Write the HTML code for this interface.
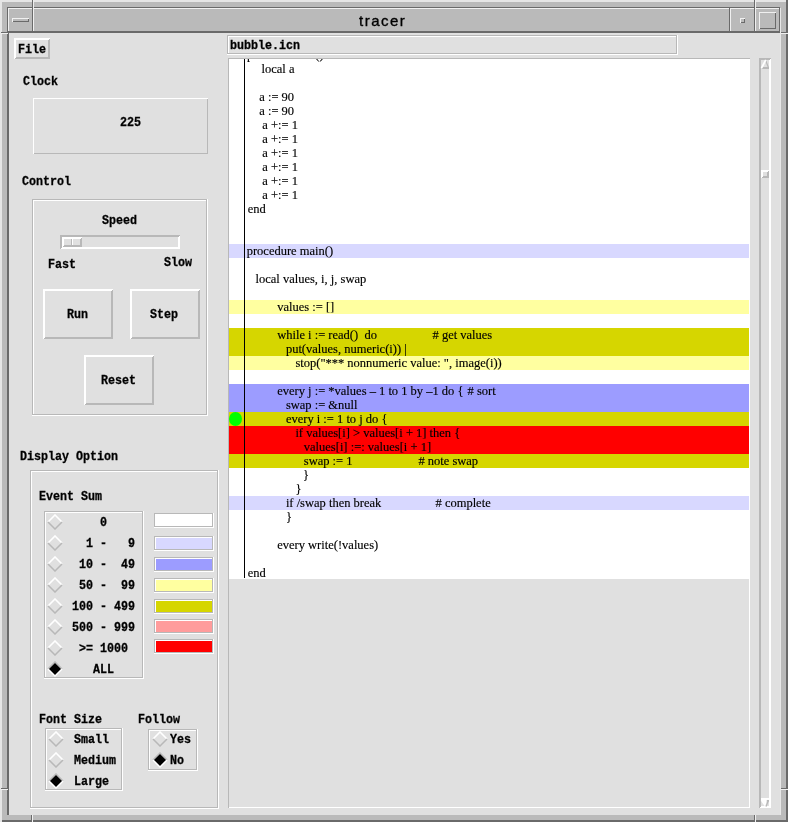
<!DOCTYPE html>
<html><head><meta charset="utf-8"><style>
html,body{margin:0;padding:0;width:788px;height:822px;overflow:hidden;background:#e0e0e0}
div,svg{position:absolute}
.m{font-family:"Liberation Mono",monospace;font-weight:bold;line-height:0;white-space:pre;transform-origin:0 0;color:#000;-webkit-text-stroke:0.3px #000;filter:grayscale(1)}
.s{font-family:"Liberation Serif",serif;line-height:0;white-space:pre;color:#000;-webkit-text-stroke:0.15px #000;filter:grayscale(1)}
.n{font-family:"Liberation Sans",sans-serif;line-height:0;white-space:pre;color:#000;-webkit-text-stroke:0.35px #000;filter:grayscale(1)}
</style></head><body>
<div style="left:0px;top:0px;width:788px;height:822px;background:#bababa;"></div>
<div style="left:0px;top:0px;width:786px;height:2px;background:#e6e6e6;"></div>
<div style="left:0px;top:0px;width:2px;height:822px;background:#e6e6e6;"></div>
<div style="left:2px;top:820px;width:786px;height:2px;background:#6a6a6a;"></div>
<div style="left:786px;top:0px;width:2px;height:822px;background:#6a6a6a;"></div>
<div style="left:7px;top:7px;width:773px;height:1px;background:#6a6a6a;"></div>
<div style="left:7px;top:7px;width:1px;height:808px;background:#6a6a6a;"></div>
<div style="left:8px;top:8px;width:772px;height:23px;background:#bababa;"></div>
<div style="left:8px;top:8px;width:25px;height:1px;background:#f0f0f0;"></div>
<div style="left:8px;top:8px;width:1px;height:23px;background:#f0f0f0;"></div>
<div style="left:32px;top:8px;width:1px;height:23px;background:#6a6a6a;"></div>
<div style="left:33px;top:8px;width:697px;height:1px;background:#f0f0f0;"></div>
<div style="left:33px;top:8px;width:1px;height:23px;background:#f0f0f0;"></div>
<div style="left:729px;top:8px;width:1px;height:23px;background:#6a6a6a;"></div>
<div style="left:730px;top:8px;width:25px;height:1px;background:#f0f0f0;"></div>
<div style="left:730px;top:8px;width:1px;height:23px;background:#f0f0f0;"></div>
<div style="left:754px;top:8px;width:1px;height:23px;background:#6a6a6a;"></div>
<div style="left:755px;top:8px;width:25px;height:1px;background:#f0f0f0;"></div>
<div style="left:755px;top:8px;width:1px;height:23px;background:#f0f0f0;"></div>
<div style="left:779px;top:8px;width:1px;height:23px;background:#6a6a6a;"></div>
<div style="left:8px;top:31px;width:772px;height:2px;background:#6a6a6a;"></div>
<div style="left:780px;top:8px;width:1px;height:807px;background:#e8e8e8;"></div>
<div style="left:12px;top:18px;width:17px;height:1px;background:#f0f0f0;"></div>
<div style="left:12px;top:18px;width:1px;height:4px;background:#f0f0f0;"></div>
<div style="left:13px;top:21px;width:16px;height:1px;background:#6a6a6a;"></div>
<div style="left:28px;top:19px;width:1px;height:3px;background:#6a6a6a;"></div>
<div style="left:740px;top:18px;width:5px;height:1px;background:#f0f0f0;"></div>
<div style="left:740px;top:18px;width:1px;height:5px;background:#f0f0f0;"></div>
<div style="left:741px;top:22px;width:4px;height:1px;background:#6a6a6a;"></div>
<div style="left:744px;top:19px;width:1px;height:4px;background:#6a6a6a;"></div>
<div style="left:759px;top:12px;width:17px;height:1px;background:#f0f0f0;"></div>
<div style="left:759px;top:12px;width:1px;height:17px;background:#f0f0f0;"></div>
<div style="left:760px;top:28px;width:16px;height:1px;background:#6a6a6a;"></div>
<div style="left:775px;top:13px;width:1px;height:16px;background:#6a6a6a;"></div>
<div style="left:1px;top:32px;width:7px;height:1px;background:#6a6a6a;"></div>
<div style="left:1px;top:33px;width:7px;height:1px;background:#f0f0f0;"></div>
<div style="left:781px;top:32px;width:7px;height:1px;background:#6a6a6a;"></div>
<div style="left:781px;top:33px;width:7px;height:1px;background:#f0f0f0;"></div>
<div style="left:1px;top:788px;width:7px;height:1px;background:#6a6a6a;"></div>
<div style="left:1px;top:789px;width:7px;height:1px;background:#f0f0f0;"></div>
<div style="left:781px;top:788px;width:7px;height:1px;background:#6a6a6a;"></div>
<div style="left:781px;top:789px;width:7px;height:1px;background:#f0f0f0;"></div>
<div style="left:32px;top:0px;width:1px;height:8px;background:#6a6a6a;"></div>
<div style="left:33px;top:0px;width:1px;height:8px;background:#f0f0f0;"></div>
<div style="left:754px;top:0px;width:1px;height:8px;background:#6a6a6a;"></div>
<div style="left:755px;top:0px;width:1px;height:8px;background:#f0f0f0;"></div>
<div style="left:31px;top:815px;width:1px;height:7px;background:#6a6a6a;"></div>
<div style="left:32px;top:815px;width:1px;height:7px;background:#f0f0f0;"></div>
<div style="left:754px;top:815px;width:1px;height:7px;background:#6a6a6a;"></div>
<div style="left:755px;top:815px;width:1px;height:7px;background:#f0f0f0;"></div>
<div class="n" style="left:359px;top:20.60px;font-size:15px;letter-spacing:1.5px">tracer</div>
<div style="left:8px;top:33px;width:772px;height:782px;background:#e0e0e0;"></div>
<div style="left:8px;top:33px;width:1px;height:782px;background:#6a6a6a;"></div>
<div style="left:14px;top:38px;width:36px;height:1px;background:#ffffff;"></div>
<div style="left:14px;top:38px;width:1px;height:21px;background:#ffffff;"></div>
<div style="left:15px;top:58px;width:35px;height:1px;background:#b8b8b8;"></div>
<div style="left:49px;top:39px;width:1px;height:20px;background:#b8b8b8;"></div>
<div style="left:15px;top:39px;width:34px;height:1px;background:#ffffff;"></div>
<div style="left:15px;top:39px;width:1px;height:19px;background:#ffffff;"></div>
<div style="left:16px;top:57px;width:33px;height:1px;background:#b8b8b8;"></div>
<div style="left:48px;top:40px;width:1px;height:18px;background:#b8b8b8;"></div>
<div class="m" style="left:18px;top:50.41px;font-size:13.5px;transform:scaleX(0.864)">File</div>
<div class="m" style="left:23px;top:82.41px;font-size:13.5px;transform:scaleX(0.864)">Clock</div>
<div style="left:33px;top:98px;width:175px;height:1px;background:#ffffff;"></div>
<div style="left:33px;top:98px;width:1px;height:56px;background:#ffffff;"></div>
<div style="left:34px;top:153px;width:174px;height:1px;background:#b8b8b8;"></div>
<div style="left:207px;top:99px;width:1px;height:55px;background:#b8b8b8;"></div>
<div class="m" style="left:120px;top:122.91px;font-size:13.5px;transform:scaleX(0.864)">225</div>
<div class="m" style="left:22px;top:181.91px;font-size:13.5px;transform:scaleX(0.864)">Control</div>
<div style="left:32px;top:199px;width:175px;height:1px;background:#b8b8b8;"></div>
<div style="left:32px;top:199px;width:1px;height:216px;background:#b8b8b8;"></div>
<div style="left:33px;top:414px;width:174px;height:1px;background:#b8b8b8;"></div>
<div style="left:206px;top:200px;width:1px;height:215px;background:#b8b8b8;"></div>
<div style="left:33px;top:200px;width:173px;height:1px;background:#ffffff;"></div>
<div style="left:33px;top:200px;width:1px;height:214px;background:#ffffff;"></div>
<div style="left:32px;top:415px;width:176px;height:1px;background:#ffffff;"></div>
<div style="left:207px;top:199px;width:1px;height:217px;background:#ffffff;"></div>
<div class="m" style="left:102px;top:220.71px;font-size:13.5px;transform:scaleX(0.864)">Speed</div>
<div style="left:60px;top:235px;width:120px;height:1px;background:#b8b8b8;"></div>
<div style="left:60px;top:235px;width:1px;height:14px;background:#b8b8b8;"></div>
<div style="left:61px;top:248px;width:119px;height:1px;background:#ffffff;"></div>
<div style="left:179px;top:236px;width:1px;height:13px;background:#ffffff;"></div>
<div style="left:61px;top:236px;width:118px;height:1px;background:#b8b8b8;"></div>
<div style="left:61px;top:236px;width:1px;height:12px;background:#b8b8b8;"></div>
<div style="left:62px;top:247px;width:117px;height:1px;background:#ffffff;"></div>
<div style="left:178px;top:237px;width:1px;height:11px;background:#ffffff;"></div>
<div style="left:62px;top:237px;width:20px;height:1px;background:#ffffff;"></div>
<div style="left:62px;top:237px;width:1px;height:10px;background:#ffffff;"></div>
<div style="left:63px;top:246px;width:19px;height:1px;background:#b8b8b8;"></div>
<div style="left:81px;top:238px;width:1px;height:9px;background:#b8b8b8;"></div>
<div style="left:63px;top:238px;width:18px;height:1px;background:#ffffff;"></div>
<div style="left:63px;top:238px;width:1px;height:8px;background:#ffffff;"></div>
<div style="left:64px;top:245px;width:17px;height:1px;background:#b8b8b8;"></div>
<div style="left:80px;top:239px;width:1px;height:7px;background:#b8b8b8;"></div>
<div style="left:71px;top:239px;width:1px;height:6px;background:#b8b8b8;"></div>
<div style="left:72px;top:239px;width:1px;height:6px;background:#ffffff;"></div>
<div class="m" style="left:48px;top:264.81px;font-size:13.5px;transform:scaleX(0.864)">Fast</div>
<div class="m" style="left:164px;top:263.41px;font-size:13.5px;transform:scaleX(0.864)">Slow</div>
<div style="left:43px;top:289px;width:70px;height:1px;background:#ffffff;"></div>
<div style="left:43px;top:289px;width:1px;height:50px;background:#ffffff;"></div>
<div style="left:44px;top:338px;width:69px;height:1px;background:#b8b8b8;"></div>
<div style="left:112px;top:290px;width:1px;height:49px;background:#b8b8b8;"></div>
<div style="left:44px;top:290px;width:68px;height:1px;background:#ffffff;"></div>
<div style="left:44px;top:290px;width:1px;height:48px;background:#ffffff;"></div>
<div style="left:45px;top:337px;width:67px;height:1px;background:#b8b8b8;"></div>
<div style="left:111px;top:291px;width:1px;height:47px;background:#b8b8b8;"></div>
<div style="left:130px;top:289px;width:70px;height:1px;background:#ffffff;"></div>
<div style="left:130px;top:289px;width:1px;height:50px;background:#ffffff;"></div>
<div style="left:131px;top:338px;width:69px;height:1px;background:#b8b8b8;"></div>
<div style="left:199px;top:290px;width:1px;height:49px;background:#b8b8b8;"></div>
<div style="left:131px;top:290px;width:68px;height:1px;background:#ffffff;"></div>
<div style="left:131px;top:290px;width:1px;height:48px;background:#ffffff;"></div>
<div style="left:132px;top:337px;width:67px;height:1px;background:#b8b8b8;"></div>
<div style="left:198px;top:291px;width:1px;height:47px;background:#b8b8b8;"></div>
<div style="left:84px;top:355px;width:70px;height:1px;background:#ffffff;"></div>
<div style="left:84px;top:355px;width:1px;height:50px;background:#ffffff;"></div>
<div style="left:85px;top:404px;width:69px;height:1px;background:#b8b8b8;"></div>
<div style="left:153px;top:356px;width:1px;height:49px;background:#b8b8b8;"></div>
<div style="left:85px;top:356px;width:68px;height:1px;background:#ffffff;"></div>
<div style="left:85px;top:356px;width:1px;height:48px;background:#ffffff;"></div>
<div style="left:86px;top:403px;width:67px;height:1px;background:#b8b8b8;"></div>
<div style="left:152px;top:357px;width:1px;height:47px;background:#b8b8b8;"></div>
<div class="m" style="left:67px;top:315.41px;font-size:13.5px;transform:scaleX(0.864)">Run</div>
<div class="m" style="left:150px;top:315.41px;font-size:13.5px;transform:scaleX(0.864)">Step</div>
<div class="m" style="left:101px;top:381.41px;font-size:13.5px;transform:scaleX(0.864)">Reset</div>
<div class="m" style="left:20px;top:457.41px;font-size:13.5px;transform:scaleX(0.864)">Display Option</div>
<div style="left:30px;top:470px;width:188px;height:1px;background:#b8b8b8;"></div>
<div style="left:30px;top:470px;width:1px;height:338px;background:#b8b8b8;"></div>
<div style="left:31px;top:807px;width:187px;height:1px;background:#b8b8b8;"></div>
<div style="left:217px;top:471px;width:1px;height:337px;background:#b8b8b8;"></div>
<div style="left:31px;top:471px;width:186px;height:1px;background:#ffffff;"></div>
<div style="left:31px;top:471px;width:1px;height:336px;background:#ffffff;"></div>
<div style="left:30px;top:808px;width:189px;height:1px;background:#ffffff;"></div>
<div style="left:218px;top:470px;width:1px;height:339px;background:#ffffff;"></div>
<div class="m" style="left:39px;top:497.41px;font-size:13.5px;transform:scaleX(0.864)">Event Sum</div>
<div style="left:44px;top:511px;width:99px;height:1px;background:#b8b8b8;"></div>
<div style="left:44px;top:511px;width:1px;height:167px;background:#b8b8b8;"></div>
<div style="left:45px;top:677px;width:98px;height:1px;background:#b8b8b8;"></div>
<div style="left:142px;top:512px;width:1px;height:166px;background:#b8b8b8;"></div>
<div style="left:45px;top:512px;width:97px;height:1px;background:#ffffff;"></div>
<div style="left:45px;top:512px;width:1px;height:165px;background:#ffffff;"></div>
<div style="left:44px;top:678px;width:100px;height:1px;background:#ffffff;"></div>
<div style="left:143px;top:511px;width:1px;height:168px;background:#ffffff;"></div>
<svg style="left:47.2px;top:513.5px" width="16" height="16" viewBox="0 0 16 16"><path d="M1 8 L8 1 L15 8" fill="none" stroke="#fff" stroke-width="1.6"/><path d="M1 8 L8 15 L15 8" fill="none" stroke="#b8b8b8" stroke-width="1.5"/></svg>
<div class="m" style="left:72.4px;top:523.41px;font-size:13.5px;transform:scaleX(0.864)">    0</div>
<svg style="left:47.2px;top:534.5px" width="16" height="16" viewBox="0 0 16 16"><path d="M1 8 L8 1 L15 8" fill="none" stroke="#fff" stroke-width="1.6"/><path d="M1 8 L8 15 L15 8" fill="none" stroke="#b8b8b8" stroke-width="1.5"/></svg>
<div class="m" style="left:72.4px;top:544.41px;font-size:13.5px;transform:scaleX(0.864)">  1 -   9</div>
<svg style="left:47.2px;top:555.5px" width="16" height="16" viewBox="0 0 16 16"><path d="M1 8 L8 1 L15 8" fill="none" stroke="#fff" stroke-width="1.6"/><path d="M1 8 L8 15 L15 8" fill="none" stroke="#b8b8b8" stroke-width="1.5"/></svg>
<div class="m" style="left:72.4px;top:565.41px;font-size:13.5px;transform:scaleX(0.864)"> 10 -  49</div>
<svg style="left:47.2px;top:576.5px" width="16" height="16" viewBox="0 0 16 16"><path d="M1 8 L8 1 L15 8" fill="none" stroke="#fff" stroke-width="1.6"/><path d="M1 8 L8 15 L15 8" fill="none" stroke="#b8b8b8" stroke-width="1.5"/></svg>
<div class="m" style="left:72.4px;top:586.41px;font-size:13.5px;transform:scaleX(0.864)"> 50 -  99</div>
<svg style="left:47.2px;top:597.5px" width="16" height="16" viewBox="0 0 16 16"><path d="M1 8 L8 1 L15 8" fill="none" stroke="#fff" stroke-width="1.6"/><path d="M1 8 L8 15 L15 8" fill="none" stroke="#b8b8b8" stroke-width="1.5"/></svg>
<div class="m" style="left:72.4px;top:607.41px;font-size:13.5px;transform:scaleX(0.864)">100 - 499</div>
<svg style="left:47.2px;top:618.5px" width="16" height="16" viewBox="0 0 16 16"><path d="M1 8 L8 1 L15 8" fill="none" stroke="#fff" stroke-width="1.6"/><path d="M1 8 L8 15 L15 8" fill="none" stroke="#b8b8b8" stroke-width="1.5"/></svg>
<div class="m" style="left:72.4px;top:628.41px;font-size:13.5px;transform:scaleX(0.864)">500 - 999</div>
<svg style="left:47.2px;top:639.5px" width="16" height="16" viewBox="0 0 16 16"><path d="M1 8 L8 1 L15 8" fill="none" stroke="#fff" stroke-width="1.6"/><path d="M1 8 L8 15 L15 8" fill="none" stroke="#b8b8b8" stroke-width="1.5"/></svg>
<div class="m" style="left:72.4px;top:649.41px;font-size:13.5px;transform:scaleX(0.864)"> >= 1000</div>
<svg style="left:47.2px;top:660.5px" width="16" height="16" viewBox="0 0 16 16"><path d="M8 1 L15 8 L8 15 L1 8 Z" fill="#000"/><path d="M1 8 L8 1 L15 8" fill="none" stroke="#b8b8b8" stroke-width="1.5"/><path d="M1 8 L8 15 L15 8" fill="none" stroke="#fff" stroke-width="1.5"/></svg>
<div class="m" style="left:72.4px;top:670.41px;font-size:13.5px;transform:scaleX(0.864)">   ALL</div>
<div style="left:154px;top:513px;width:59px;height:1px;background:#b8b8b8;"></div>
<div style="left:154px;top:513px;width:1px;height:14px;background:#b8b8b8;"></div>
<div style="left:155px;top:526px;width:58px;height:1px;background:#b8b8b8;"></div>
<div style="left:212px;top:514px;width:1px;height:13px;background:#b8b8b8;"></div>
<div style="left:155px;top:514px;width:57px;height:1px;background:#ffffff;"></div>
<div style="left:155px;top:514px;width:1px;height:12px;background:#ffffff;"></div>
<div style="left:154px;top:527px;width:60px;height:1px;background:#ffffff;"></div>
<div style="left:213px;top:513px;width:1px;height:15px;background:#ffffff;"></div>
<div style="left:156px;top:515px;width:56px;height:11px;background:#ffffff;"></div>
<div style="left:154px;top:536px;width:59px;height:1px;background:#b8b8b8;"></div>
<div style="left:154px;top:536px;width:1px;height:14px;background:#b8b8b8;"></div>
<div style="left:155px;top:549px;width:58px;height:1px;background:#b8b8b8;"></div>
<div style="left:212px;top:537px;width:1px;height:13px;background:#b8b8b8;"></div>
<div style="left:155px;top:537px;width:57px;height:1px;background:#ffffff;"></div>
<div style="left:155px;top:537px;width:1px;height:12px;background:#ffffff;"></div>
<div style="left:154px;top:550px;width:60px;height:1px;background:#ffffff;"></div>
<div style="left:213px;top:536px;width:1px;height:15px;background:#ffffff;"></div>
<div style="left:156px;top:538px;width:56px;height:11px;background:#d8d8ff;"></div>
<div style="left:154px;top:557px;width:59px;height:1px;background:#b8b8b8;"></div>
<div style="left:154px;top:557px;width:1px;height:14px;background:#b8b8b8;"></div>
<div style="left:155px;top:570px;width:58px;height:1px;background:#b8b8b8;"></div>
<div style="left:212px;top:558px;width:1px;height:13px;background:#b8b8b8;"></div>
<div style="left:155px;top:558px;width:57px;height:1px;background:#ffffff;"></div>
<div style="left:155px;top:558px;width:1px;height:12px;background:#ffffff;"></div>
<div style="left:154px;top:571px;width:60px;height:1px;background:#ffffff;"></div>
<div style="left:213px;top:557px;width:1px;height:15px;background:#ffffff;"></div>
<div style="left:156px;top:559px;width:56px;height:11px;background:#9c9cff;"></div>
<div style="left:154px;top:578px;width:59px;height:1px;background:#b8b8b8;"></div>
<div style="left:154px;top:578px;width:1px;height:14px;background:#b8b8b8;"></div>
<div style="left:155px;top:591px;width:58px;height:1px;background:#b8b8b8;"></div>
<div style="left:212px;top:579px;width:1px;height:13px;background:#b8b8b8;"></div>
<div style="left:155px;top:579px;width:57px;height:1px;background:#ffffff;"></div>
<div style="left:155px;top:579px;width:1px;height:12px;background:#ffffff;"></div>
<div style="left:154px;top:592px;width:60px;height:1px;background:#ffffff;"></div>
<div style="left:213px;top:578px;width:1px;height:15px;background:#ffffff;"></div>
<div style="left:156px;top:580px;width:56px;height:11px;background:#ffffa0;"></div>
<div style="left:154px;top:599px;width:59px;height:1px;background:#b8b8b8;"></div>
<div style="left:154px;top:599px;width:1px;height:14px;background:#b8b8b8;"></div>
<div style="left:155px;top:612px;width:58px;height:1px;background:#b8b8b8;"></div>
<div style="left:212px;top:600px;width:1px;height:13px;background:#b8b8b8;"></div>
<div style="left:155px;top:600px;width:57px;height:1px;background:#ffffff;"></div>
<div style="left:155px;top:600px;width:1px;height:12px;background:#ffffff;"></div>
<div style="left:154px;top:613px;width:60px;height:1px;background:#ffffff;"></div>
<div style="left:213px;top:599px;width:1px;height:15px;background:#ffffff;"></div>
<div style="left:156px;top:601px;width:56px;height:11px;background:#d6d600;"></div>
<div style="left:154px;top:619px;width:59px;height:1px;background:#b8b8b8;"></div>
<div style="left:154px;top:619px;width:1px;height:14px;background:#b8b8b8;"></div>
<div style="left:155px;top:632px;width:58px;height:1px;background:#b8b8b8;"></div>
<div style="left:212px;top:620px;width:1px;height:13px;background:#b8b8b8;"></div>
<div style="left:155px;top:620px;width:57px;height:1px;background:#ffffff;"></div>
<div style="left:155px;top:620px;width:1px;height:12px;background:#ffffff;"></div>
<div style="left:154px;top:633px;width:60px;height:1px;background:#ffffff;"></div>
<div style="left:213px;top:619px;width:1px;height:15px;background:#ffffff;"></div>
<div style="left:156px;top:621px;width:56px;height:11px;background:#ff9c9c;"></div>
<div style="left:154px;top:639px;width:59px;height:1px;background:#b8b8b8;"></div>
<div style="left:154px;top:639px;width:1px;height:14px;background:#b8b8b8;"></div>
<div style="left:155px;top:652px;width:58px;height:1px;background:#b8b8b8;"></div>
<div style="left:212px;top:640px;width:1px;height:13px;background:#b8b8b8;"></div>
<div style="left:155px;top:640px;width:57px;height:1px;background:#ffffff;"></div>
<div style="left:155px;top:640px;width:1px;height:12px;background:#ffffff;"></div>
<div style="left:154px;top:653px;width:60px;height:1px;background:#ffffff;"></div>
<div style="left:213px;top:639px;width:1px;height:15px;background:#ffffff;"></div>
<div style="left:156px;top:641px;width:56px;height:11px;background:#ff0000;"></div>
<div class="m" style="left:39px;top:720.21px;font-size:13.5px;transform:scaleX(0.864)">Font Size</div>
<div class="m" style="left:138px;top:720.21px;font-size:13.5px;transform:scaleX(0.864)">Follow</div>
<div style="left:45px;top:728px;width:77px;height:1px;background:#b8b8b8;"></div>
<div style="left:45px;top:728px;width:1px;height:62px;background:#b8b8b8;"></div>
<div style="left:46px;top:789px;width:76px;height:1px;background:#b8b8b8;"></div>
<div style="left:121px;top:729px;width:1px;height:61px;background:#b8b8b8;"></div>
<div style="left:46px;top:729px;width:75px;height:1px;background:#ffffff;"></div>
<div style="left:46px;top:729px;width:1px;height:60px;background:#ffffff;"></div>
<div style="left:45px;top:790px;width:78px;height:1px;background:#ffffff;"></div>
<div style="left:122px;top:728px;width:1px;height:63px;background:#ffffff;"></div>
<svg style="left:48px;top:730.6px" width="16" height="16" viewBox="0 0 16 16"><path d="M1 8 L8 1 L15 8" fill="none" stroke="#fff" stroke-width="1.6"/><path d="M1 8 L8 15 L15 8" fill="none" stroke="#b8b8b8" stroke-width="1.5"/></svg>
<div class="m" style="left:73.5px;top:739.81px;font-size:13.5px;transform:scaleX(0.864)">Small</div>
<svg style="left:48px;top:751.6px" width="16" height="16" viewBox="0 0 16 16"><path d="M1 8 L8 1 L15 8" fill="none" stroke="#fff" stroke-width="1.6"/><path d="M1 8 L8 15 L15 8" fill="none" stroke="#b8b8b8" stroke-width="1.5"/></svg>
<div class="m" style="left:73.5px;top:760.81px;font-size:13.5px;transform:scaleX(0.864)">Medium</div>
<svg style="left:48px;top:772.6px" width="16" height="16" viewBox="0 0 16 16"><path d="M8 1 L15 8 L8 15 L1 8 Z" fill="#000"/><path d="M1 8 L8 1 L15 8" fill="none" stroke="#b8b8b8" stroke-width="1.5"/><path d="M1 8 L8 15 L15 8" fill="none" stroke="#fff" stroke-width="1.5"/></svg>
<div class="m" style="left:73.5px;top:781.81px;font-size:13.5px;transform:scaleX(0.864)">Large</div>
<div style="left:148px;top:729px;width:49px;height:1px;background:#b8b8b8;"></div>
<div style="left:148px;top:729px;width:1px;height:41px;background:#b8b8b8;"></div>
<div style="left:149px;top:769px;width:48px;height:1px;background:#b8b8b8;"></div>
<div style="left:196px;top:730px;width:1px;height:40px;background:#b8b8b8;"></div>
<div style="left:149px;top:730px;width:47px;height:1px;background:#ffffff;"></div>
<div style="left:149px;top:730px;width:1px;height:39px;background:#ffffff;"></div>
<div style="left:148px;top:770px;width:50px;height:1px;background:#ffffff;"></div>
<div style="left:197px;top:729px;width:1px;height:42px;background:#ffffff;"></div>
<svg style="left:151.5px;top:731.3px" width="16" height="16" viewBox="0 0 16 16"><path d="M1 8 L8 1 L15 8" fill="none" stroke="#fff" stroke-width="1.6"/><path d="M1 8 L8 15 L15 8" fill="none" stroke="#b8b8b8" stroke-width="1.5"/></svg>
<div class="m" style="left:169.5px;top:740.21px;font-size:13.5px;transform:scaleX(0.864)">Yes</div>
<svg style="left:151.5px;top:752.3px" width="16" height="16" viewBox="0 0 16 16"><path d="M8 1 L15 8 L8 15 L1 8 Z" fill="#000"/><path d="M1 8 L8 1 L15 8" fill="none" stroke="#b8b8b8" stroke-width="1.5"/><path d="M1 8 L8 15 L15 8" fill="none" stroke="#fff" stroke-width="1.5"/></svg>
<div class="m" style="left:169.5px;top:761.21px;font-size:13.5px;transform:scaleX(0.864)">No</div>
<div style="left:227px;top:35px;width:450px;height:1px;background:#b8b8b8;"></div>
<div style="left:227px;top:35px;width:1px;height:19px;background:#b8b8b8;"></div>
<div style="left:228px;top:53px;width:449px;height:1px;background:#b8b8b8;"></div>
<div style="left:676px;top:36px;width:1px;height:18px;background:#b8b8b8;"></div>
<div style="left:228px;top:36px;width:448px;height:1px;background:#ffffff;"></div>
<div style="left:228px;top:36px;width:1px;height:17px;background:#ffffff;"></div>
<div style="left:227px;top:54px;width:451px;height:1px;background:#ffffff;"></div>
<div style="left:677px;top:35px;width:1px;height:20px;background:#ffffff;"></div>
<div class="m" style="left:229.5px;top:46.41px;font-size:13.5px;transform:scaleX(0.864)">bubble.icn</div>
<div style="left:228px;top:58px;width:522px;height:750px;background:#b8b8b8;"></div>
<div style="left:229px;top:807px;width:521px;height:1px;background:#ffffff;"></div>
<div style="left:749px;top:59px;width:1px;height:749px;background:#ffffff;"></div>
<div style="left:229px;top:59px;width:520px;height:748px;background:#e0e0e0;"></div>
<div style="left:229px;top:59px;width:520px;height:520px;background:#ffffff;"></div>
<div style="left:229px;top:59px;width:520px;height:520px;overflow:hidden">
<div class="s" style="left:18px;top:-3.72px;font-size:12.5px">procedure inc()</div>
<div class="s" style="left:32.5px;top:10.28px;font-size:12.5px">local a</div>
<div class="s" style="left:30.30000000000001px;top:38.28px;font-size:12.5px">a := 90</div>
<div class="s" style="left:30.30000000000001px;top:52.28px;font-size:12.5px">a := 90</div>
<div class="s" style="left:33.30000000000001px;top:66.28px;font-size:12.5px">a +:= 1</div>
<div class="s" style="left:33.30000000000001px;top:80.28px;font-size:12.5px">a +:= 1</div>
<div class="s" style="left:33.30000000000001px;top:94.28px;font-size:12.5px">a +:= 1</div>
<div class="s" style="left:33.30000000000001px;top:108.28px;font-size:12.5px">a +:= 1</div>
<div class="s" style="left:33.30000000000001px;top:122.28px;font-size:12.5px">a +:= 1</div>
<div class="s" style="left:33.30000000000001px;top:136.28px;font-size:12.5px">a +:= 1</div>
<div class="s" style="left:18.80000000000001px;top:150.28px;font-size:12.5px">end</div>
<div style="left:0px;top:185px;width:520px;height:14px;background:#d8d8ff;"></div>
<div class="s" style="left:17.69999999999999px;top:192.28px;font-size:12.5px">procedure main()</div>
<div class="s" style="left:26.5px;top:220.28px;font-size:12.5px">local values, i, j, swap</div>
<div style="left:0px;top:241px;width:520px;height:14px;background:#ffffa0;"></div>
<div class="s" style="left:48.19999999999999px;top:248.28px;font-size:12.5px">values := []</div>
<div style="left:0px;top:269px;width:520px;height:14px;background:#d6d600;"></div>
<div class="s" style="left:48.19999999999999px;top:276.28px;font-size:12.5px">while i := read()  do</div>
<div class="s" style="left:203.5px;top:276.28px;font-size:12.5px"># get values</div>
<div style="left:0px;top:283px;width:520px;height:14px;background:#d6d600;"></div>
<div class="s" style="left:56.89999999999998px;top:290.28px;font-size:12.5px">put(values, numeric(i)) |</div>
<div style="left:0px;top:297px;width:520px;height:14px;background:#ffffa0;"></div>
<div class="s" style="left:66.39999999999998px;top:304.28px;font-size:12.5px">stop("*** nonnumeric value: ", image(i))</div>
<div style="left:0px;top:325px;width:520px;height:14px;background:#9c9cff;"></div>
<div class="s" style="left:48.19999999999999px;top:332.28px;font-size:12.5px">every j := *values &ndash; 1 to 1 by &ndash;1 do {</div>
<div class="s" style="left:238.5px;top:332.28px;font-size:12.5px"># sort</div>
<div style="left:0px;top:339px;width:520px;height:14px;background:#9c9cff;"></div>
<div class="s" style="left:56.89999999999998px;top:346.28px;font-size:12.5px">swap := &amp;null</div>
<div style="left:0px;top:353px;width:520px;height:14px;background:#d6d600;"></div>
<div class="s" style="left:56.89999999999998px;top:360.28px;font-size:12.5px">every i := 1 to j do {</div>
<div style="left:0px;top:367px;width:520px;height:14px;background:#ff0000;"></div>
<div class="s" style="left:66.39999999999998px;top:374.28px;font-size:12.5px">if values[i] &gt; values[i + 1] then {</div>
<div style="left:0px;top:381px;width:520px;height:14px;background:#ff0000;"></div>
<div class="s" style="left:74.80000000000001px;top:388.28px;font-size:12.5px">values[i] :=: values[i + 1]</div>
<div style="left:0px;top:395px;width:520px;height:14px;background:#d6d600;"></div>
<div class="s" style="left:74.80000000000001px;top:402.28px;font-size:12.5px">swap := 1</div>
<div class="s" style="left:189.39999999999998px;top:402.28px;font-size:12.5px"># note swap</div>
<div class="s" style="left:74.0px;top:416.28px;font-size:12.5px">}</div>
<div class="s" style="left:66.39999999999998px;top:430.28px;font-size:12.5px">}</div>
<div style="left:0px;top:437px;width:520px;height:14px;background:#d8d8ff;"></div>
<div class="s" style="left:56.89999999999998px;top:444.28px;font-size:12.5px">if /swap then break</div>
<div class="s" style="left:206.5px;top:444.28px;font-size:12.5px"># complete</div>
<div class="s" style="left:56.89999999999998px;top:458.28px;font-size:12.5px">}</div>
<div class="s" style="left:48.19999999999999px;top:486.28px;font-size:12.5px">every write(!values)</div>
<div class="s" style="left:18.80000000000001px;top:514.28px;font-size:12.5px">end</div>
<div style="left:15px;top:0px;width:1px;height:519px;background:#000;"></div>
<div style="left:0px;top:353px;width:13px;height:14px;border-radius:50%;background:#00ff00"></div>
</div>
<div style="left:759px;top:58px;width:12px;height:1px;background:#b8b8b8;"></div>
<div style="left:759px;top:58px;width:1px;height:750px;background:#b8b8b8;"></div>
<div style="left:760px;top:807px;width:11px;height:1px;background:#ffffff;"></div>
<div style="left:770px;top:59px;width:1px;height:749px;background:#ffffff;"></div>
<div style="left:760px;top:59px;width:10px;height:1px;background:#b8b8b8;"></div>
<div style="left:760px;top:59px;width:1px;height:748px;background:#b8b8b8;"></div>
<div style="left:761px;top:806px;width:9px;height:1px;background:#ffffff;"></div>
<div style="left:769px;top:60px;width:1px;height:747px;background:#ffffff;"></div>
<svg style="left:759px;top:58px" width="12" height="12" viewBox="0 0 12 12"><path d="M2 10.5 L6.5 2 L10 10.5 Z" fill="#e0e0e0"/><path d="M6.6 2.2 L9.6 10" stroke="#b8b8b8" stroke-width="1.2" fill="none"/><rect x="3" y="9" width="7" height="2" fill="#b8b8b8"/><path d="M2.5 10.2 L6.8 1.8" stroke="#fff" stroke-width="1.8" fill="none"/></svg>
<div style="left:761px;top:170px;width:8px;height:1px;background:#ffffff;"></div>
<div style="left:761px;top:170px;width:1px;height:8px;background:#ffffff;"></div>
<div style="left:762px;top:177px;width:7px;height:1px;background:#b8b8b8;"></div>
<div style="left:768px;top:171px;width:1px;height:7px;background:#b8b8b8;"></div>
<div style="left:762px;top:171px;width:6px;height:1px;background:#ffffff;"></div>
<div style="left:762px;top:171px;width:1px;height:6px;background:#ffffff;"></div>
<div style="left:763px;top:176px;width:5px;height:1px;background:#b8b8b8;"></div>
<div style="left:767px;top:172px;width:1px;height:5px;background:#b8b8b8;"></div>
<svg style="left:759px;top:796px" width="12" height="12" viewBox="0 0 12 12"><rect x="2" y="2" width="8" height="2" fill="#fff"/><path d="M2.5 4 L7 10.5" stroke="#fff" stroke-width="1.8" fill="none"/><path d="M9.5 4 L7 10.5" stroke="#b8b8b8" stroke-width="1.4" fill="none"/><rect x="8" y="4" width="2" height="1.5" fill="#b8b8b8"/><path d="M3 4 L7.5 4 L7 9 Z" fill="#fff"/></svg>
</body></html>
